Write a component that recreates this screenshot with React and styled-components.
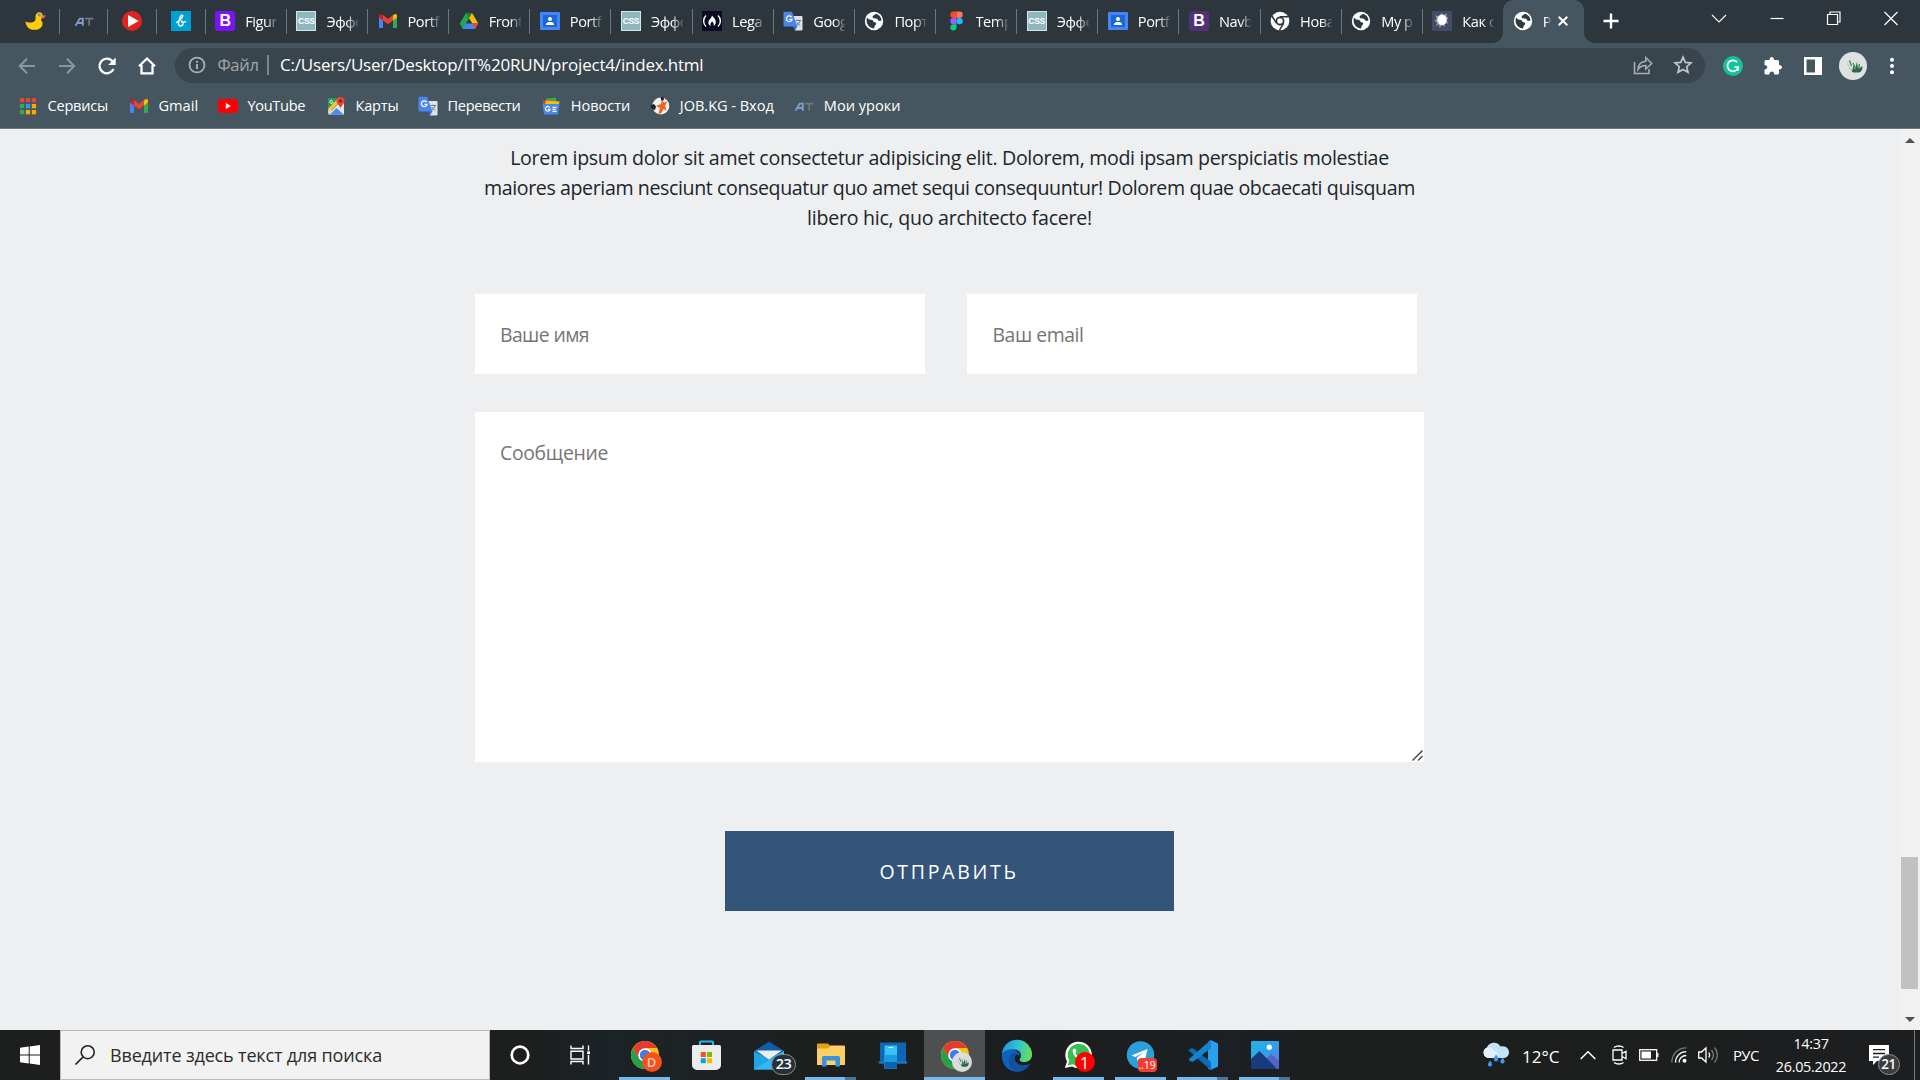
import React from "react";
import styled, { createGlobalStyle } from "styled-components";

const UI = `"Open Sans", "Noto Sans", "Liberation Sans", sans-serif`;

const GlobalStyle = createGlobalStyle`
  * { box-sizing: border-box; }
  html, body { margin: 0; padding: 0; }
  body { font-family: ${UI}; background: #edeff1; overflow: hidden; }
  svg { display: block; flex: none; overflow: visible; }
`;

const Screen = styled.div`
  width: 1920px;
  height: 1080px;
  display: flex;
  flex-direction: column;
  overflow: hidden;
`;

/* ---------- browser chrome ---------- */

const TabStrip = styled.div`
  height: 43px;
  flex: none;
  display: flex;
  align-items: stretch;
  padding-left: 11px;
  background: #2c363c;
`;

const PinnedTab = styled.div`
  width: 48.7px;
  display: flex;
  align-items: center;
  justify-content: center;
  padding: 0 1px 1px 0;
  background: linear-gradient(#6c767b, #6c767b) right 9px / 1px 25px no-repeat;
`;

const Tab = styled.div`
  width: ${(p) => (p.$last ? 80 : 81.15)}px;
  display: flex;
  align-items: center;
  gap: 10px;
  padding: 0 0 1px 9.5px;
  background: ${(p) =>
    p.$last ? "none" : "linear-gradient(#6c767b, #6c767b) right 9px / 1px 25px no-repeat"};
`;

const TabTitle = styled.span`
  width: ${(p) => p.$w || 32}px;
  white-space: nowrap;
  font-size: 14.6px;
  line-height: 22px;
  letter-spacing: -0.45px;
  color: #fff;
  -webkit-mask-image: linear-gradient(90deg, #000 ${(p) => (p.$w ? 40 : 65)}%, transparent 105%);
  mask-image: linear-gradient(90deg, #000 ${(p) => (p.$w ? 40 : 65)}%, transparent 105%);
`;

const ActiveTab = styled.div`
  position: relative;
  width: 81px;
  display: flex;
  align-items: center;
  padding: 0 0 1px 10px;
  background: #455660;
  border-radius: 10px 10px 0 0;
  &::before,
  &::after {
    content: "";
    position: absolute;
    bottom: 0;
    width: 10px;
    height: 10px;
  }
  &::before {
    left: -10px;
    background: radial-gradient(circle at 0 0, transparent 9.5px, #455660 10px);
  }
  &::after {
    right: -10px;
    background: radial-gradient(circle at 100% 0, transparent 9.5px, #455660 10px);
  }
`;

const WindowControls = styled.div`
  margin-left: auto;
  display: flex;
  align-items: flex-start;
  padding: 10px 21px 0 0;
  gap: 41.2px;
`;

const NewTab = styled.div`
  display: flex;
  align-items: center;
  padding: 0 0 1px 19px;
`;

const Toolbar = styled.div`
  height: 45px;
  flex: none;
  display: flex;
  align-items: center;
  padding: 0 18px 0 17px;
  background: #455660;
`;

const NavButtons = styled.div`
  display: flex;
  align-items: center;
  gap: 20px;
  width: 158px;
`;

const Omnibox = styled.div`
  width: 1530px;
  height: 35px;
  border-radius: 18px;
  background: #39454c;
  display: flex;
  align-items: center;
  padding: 0 12px 1px 13px;
  color: #fff;
`;

const Scheme = styled.span`
  margin-left: 11.5px;
  width: 51.5px;
  height: 20px;
  border-right: 2px solid #7c868b;
  font-size: 16.5px;
  line-height: 20px;
  color: #a0a8ac;
  letter-spacing: -0.3px;
  white-space: nowrap;
`;

const Url = styled.span`
  margin-left: 11px;
  font-size: 17px;
  line-height: 24px;
  letter-spacing: -0.2px;
  white-space: nowrap;
`;

const OmniActions = styled.div`
  margin-left: auto;
  display: flex;
  gap: 20px;
`;

const Extensions = styled.div`
  display: flex;
  align-items: center;
  gap: 20px;
  margin-left: 17.5px;
  height: 45px;
`;

const AvatarButton = styled.div`
  margin: 0 2px 0 -3.5px;
`;

const Bookmarks = styled.div`
  height: 41px;
  flex: none;
  display: flex;
  align-items: center;
  padding: 0 0 5px 18px;
  background: #455660;
  border-bottom: 1px solid #6b7a82;
`;

const Bookmark = styled.div`
  width: ${(p) => p.$w}px;
  display: flex;
  align-items: center;
  gap: 9.5px;
`;

const BookmarkName = styled.span`
  padding-bottom: 2px;
  white-space: nowrap;
  color: #fff;
  font-size: 14.6px;
  line-height: 22px;
  letter-spacing: ${(p) => p.$ls || 0}px;
`;

/* ---------- page ---------- */

const Viewport = styled.div`
  height: 901px;
  flex: none;
  display: flex;
  background: #edeff1;
`;

const Page = styled.main`
  flex: 1;
  display: flex;
  flex-direction: column;
  align-items: center;
`;

const Lead = styled.p`
  margin: 14px 0 0;
  width: 949px;
  text-align: center;
  font-size: 19.6px;
  line-height: 30px;
  color: #212529;
`;

const LeadLine = styled.span`
  display: block;
  white-space: nowrap;
  letter-spacing: ${(p) => p.$ls || 0}px;
`;

const Form = styled.form`
  width: 949px;
  margin-top: 61px;
  display: flex;
  flex-direction: column;
`;

const FieldRow = styled.div`
  display: flex;
  gap: 42px;
`;

const Input = styled.input`
  width: 450px;
  height: 80px;
  padding: 0 25px 0 ${(p) => p.$indent || 25}px;
  border: 0;
  background: #fff;
  font-family: ${UI};
  font-size: 19.4px;
  letter-spacing: ${(p) => p.$ls || 0}px;
  &::placeholder { color: #757575; opacity: 1; }
`;

const MessageBox = styled.div`
  position: relative;
  width: 949px;
  height: 350px;
  margin-top: 38px;
`;

const Message = styled.textarea`
  display: block;
  width: 100%;
  height: 100%;
  padding: 26px 25px;
  border: 0;
  background: #fff;
  font-family: ${UI};
  font-size: 19.4px;
  line-height: 30px;
  letter-spacing: -0.32px;
  resize: none;
  &::placeholder { color: #757575; opacity: 1; }
`;

const Grip = styled.span`
  position: absolute;
  right: 1px;
  bottom: 1px;
`;

const Submit = styled.button`
  width: 449px;
  height: 80px;
  margin: 69px auto 0;
  padding: 1px 1px 0 0;
  border: 0;
  background: #34547a;
  color: #fff;
  font-family: ${UI};
  font-size: 19.5px;
  letter-spacing: 2.7px;
`;

const Scrollbar = styled.div`
  width: 21px;
  background: #f1f1f1;
  display: flex;
  flex-direction: column;
  align-items: center;
  padding: 9px 0 8px;
`;

const Thumb = styled.div`
  width: 17px;
  height: 132px;
  margin: auto 0 28px;
  background: #c1c1c1;
`;

const Arrow = styled.div`
  width: 0;
  height: 0;
  border: 5px solid transparent;
  border-top-width: ${(p) => (p.$down ? 5 : 0)}px;
  border-bottom-width: ${(p) => (p.$down ? 0 : 5)}px;
  border-${(p) => (p.$down ? "top" : "bottom")}-color: #505050;
`;

/* ---------- taskbar ---------- */

const Taskbar = styled.footer`
  height: 50px;
  flex: none;
  display: flex;
  background: linear-gradient(90deg, #1d1e1e 0, #1d1e1e 530px, #1b2327 610px, #1d2224 680px, #1e1f1f 800px, #1c1d1e 1060px, #1c2024 1220px, #1d1e1e 1320px, #1c1e1f 1920px);
`;

const SystemButton = styled.div`
  width: 60px;
  display: flex;
  align-items: center;
  justify-content: center;
`;

const Search = styled.div`
  width: 430px;
  display: flex;
  align-items: center;
  gap: 15px;
  padding-left: 14px;
  border: 1px solid #bababa;
  background: #f2f2f2;
  color: #2b2b2b;
  font-size: 18px;
  letter-spacing: -0.15px;
  white-space: nowrap;
`;

const Apps = styled.div`
  display: flex;
  gap: 1px;
  margin-left: 4px;
`;

const AppBox = styled.div`
  width: 61px;
  height: 50px;
  display: flex;
  flex-direction: column;
  align-items: center;
  justify-content: space-between;
  padding-top: 10px;
  background: ${(p) => (p.$active ? "#4d4f50" : "transparent")};
`;

const IconHolder = styled.div`
  position: relative;
  width: 32px;
  height: ${(p) => p.$h || 32}px;
`;

const Running = styled.div`
  width: ${(p) => (p.$full ? 61 : 51)}px;
  height: 3px;
  background: ${(p) =>
    p.$stacked ? "linear-gradient(90deg, #76b9ed 40px, #4b7698 40px)" : "#76b9ed"};
`;

const Badge = styled.span`
  position: absolute;
  left: ${(p) => p.$x}px;
  top: ${(p) => p.$y}px;
  width: ${(p) => p.$w}px;
  height: ${(p) => p.$h}px;
  display: flex;
  align-items: center;
  justify-content: center;
  border-radius: ${(p) => p.$r || 50}px;
  border: ${(p) => p.$border || "0"};
  background: ${(p) => p.$bg};
  color: ${(p) => p.$color || "#fff"};
  font-family: ${UI};
  font-size: ${(p) => p.$fs}px;
  font-weight: ${(p) => p.$fw || 400};
  line-height: 1;
  letter-spacing: ${(p) => p.$ls || 0}px;
`;

const Tray = styled.div`
  margin-left: auto;
  width: 438px;
  display: flex;
  align-items: center;
  color: #fff;
`;

const Slot = styled.div`
  width: ${(p) => p.$w}px;
  flex: none;
  display: flex;
  align-items: center;
`;

const TrayText = styled.span`
  font-size: ${(p) => p.$fs || 15}px;
  letter-spacing: ${(p) => p.$ls || 0}px;
  white-space: nowrap;
  padding-top: ${(p) => p.$drop || 0}px;
`;

const Clock = styled.div`
  width: 96px;
  text-align: center;
  font-size: 14.4px;
  line-height: 23px;
  letter-spacing: -0.3px;
  white-space: nowrap;
`;

const Notifications = styled.div`
  margin-left: 10px;
`;

const DesktopEdge = styled.div`
  width: 6px;
  height: 50px;
  margin-left: auto;
  border-left: 1px solid #7a7b7b;
`;

/* ---------- icons ---------- */

const Svg = ({ s = 20, w, h, vb = "0 0 20 20", children, ...rest }) => (
  <svg width={w || s} height={h || s} viewBox={vb} fill="none" {...rest}>
    {children}
  </svg>
);

const Duck = () => (
  <Svg>
    <path d="M10.500 6.500C10.300 3.300 12 1.300 14.500 1.300C17 1.300 18 3.500 17.500 5.500C17.200 7.200 16 8 16 9.300C17.800 11 18 13 17 15C15.700 18 12.500 18.800 9 18.800C5 18.800 1 16.800 .4 10C2 11.700 5 11.800 7.500 11.200C9.500 10.700 11 9.500 10.500 6.500Z" fill="#fdcb0a" />
    <circle cx="14.300" cy="4" r="1.600" fill="#5d9bb0" />
    <path d="M16.500 4.600L20.500 4.200C20.500 6.500 18.500 7.800 16.300 7.400Z" fill="#f2685a" />
  </Svg>
);
const AT = () => (
  <Svg>
    <path d="M1.500 14.800L5.800 7.600H8.800V14.800M4 12H9" stroke="#7e9dc8" strokeWidth="1.900" />
    <path d="M11 7.600H19.500M15.200 7.600V14.800" stroke="#6f7a80" strokeWidth="1.700" />
  </Svg>
);
const PlayRound = () => (
  <Svg>
    <circle cx="10" cy="10" r="10" fill="#e2231d" />
    <path d="M6 4L16.800 10L6 16Z" fill="#fff" />
  </Svg>
);
const BlueScript = () => (
  <Svg>
    <rect width="20" height="20" fill="#009fd6" />
    <path d="M5.500 11.500C8.500 9.500 12 6.300 11.700 4.600C11.300 3.500 9.800 4.500 9 6.500C8.200 8.500 7.300 11 7.500 13C7.800 15.800 11.300 15.600 12 13C12.400 11.300 11.500 9.800 10.500 10.200C10.900 11.600 13 11.700 14.500 10.500" stroke="#fff" strokeWidth="1.400" strokeLinecap="round" />
  </Svg>
);
const LetterTile = styled.span`
  width: 20px;
  height: 20px;
  flex: none;
  display: flex;
  align-items: center;
  justify-content: center;
  border-radius: ${(p) => p.$r || 0}px;
  border: ${(p) => p.$border || "0"};
  background: ${(p) => p.$bg};
  color: #fff;
  font-family: "Liberation Sans", sans-serif;
  font-weight: 700;
  font-size: ${(p) => p.$fs}px;
  line-height: 1;
  letter-spacing: ${(p) => p.$ls || 0}px;
`;
const BootPurple = () => <LetterTile $bg="#7c12f6" $r={3} $fs={16}>B</LetterTile>;
const BootOld = () => <LetterTile $bg="#523276" $r={3} $fs={16}>B</LetterTile>;
const Css = () => <LetterTile $bg="#8fb8be" $border="1px solid #d5e6e8" $fs={8.5} $ls={-0.3}>CSS</LetterTile>;
const Gmail = () => (
  <Svg>
    <path d="M1 5V16.200C1 16.800 1.500 17 2 17H5V8Z" fill="#4285f4" />
    <path d="M15 8V17H18C18.600 17 19 16.700 19 16.200V5Z" fill="#34a853" />
    <path d="M15 4.500V9.500L19 6.500V5C19 3 17 2.500 15.800 3.600Z" fill="#fbbc04" />
    <path d="M5 9.500V4L10 8L15 4V9.500L10 13.300Z" fill="#ea4335" />
    <path d="M1 5V6.500L5 9.500V4.200L4.200 3.600C3 2.500 1 3.200 1 5Z" fill="#c5221f" />
  </Svg>
);
const Drive = () => (
  <Svg>
    <path d="M13 2L19.300 12.500H13.400L10 7.300L7 2Z" fill="#fbbc04" />
    <path d="M6.800 12.500H19.300L16 18H4L1 12.800Z" fill="#4285f4" />
    <path d="M13.400 12.500H19.300L16 18Z" fill="#ea4335" />
    <path d="M7 2L10 7.300L4 18L.8 12.500Z" fill="#22a654" />
    <path d="M7 2H13L10 7.300Z" fill="#188038" />
  </Svg>
);
const Contacts = () => (
  <Svg>
    <rect y="1" width="20" height="18" rx="1" fill="#4486f5" />
    <rect x="3" y="4" width="14" height="12" fill="#1e66d2" />
    <circle cx="10" cy="8" r="2" fill="#fff" />
    <path d="M5.800 14C6 11.500 8 11 10 11C12 11 14 11.500 14.200 14Z" fill="#fff" />
  </Svg>
);
const Fcc = () => (
  <Svg>
    <rect width="20" height="20" fill="#0a0a23" />
    <path d="M4 4.500C.8 7.500 .8 12.500 4 15.500M16 4.500C19.200 7.500 19.200 12.500 16 15.500" stroke="#fff" strokeWidth="1.400" />
    <path d="M10 4.500C11.500 6.500 14 8.500 13.800 11.300C13.700 13.500 12.500 14.500 11.500 15C12.300 13 11.500 11.500 10 10.500C8.800 11.800 8 13 8.700 15C7 14.300 6.200 12.800 6.400 11C6.700 8.500 9.500 7.500 10 4.500Z" fill="#fff" />
  </Svg>
);
const Translate = () => (
  <Svg>
    <path d="M8 5H18.500A1 1 0 0 1 19.500 6V18.500A1 1 0 0 1 18.500 19.500H12Z" fill="#dfe3e6" />
    <path d="M9.500 15H14.500L12 19.500Z" fill="#3367d6" />
    <path d="M1.500 .8H9L14.500 15.500H1.500A1 1 0 0 1 .5 14.500V1.800A1 1 0 0 1 1.500 .8Z" fill="#4a86ee" />
    <path d="M8.600 6.200A2.800 2.800 0 1 0 9 8.300H6.500" stroke="#fff" strokeWidth="1.300" />
    <path d="M12.500 9.500H18M15.300 8.500V9.500M17 9.500C16.500 12 15 13.500 13.800 14.300M13.800 11C14.500 12.500 16 13.800 17.300 14.600" stroke="#6d7f8c" strokeWidth="1" />
  </Svg>
);
const Globe = () => (
  <Svg>
    <circle cx="10" cy="10" r="9.200" fill="#fff" />
    <path d="M3 6.500C4.500 8.500 6.500 8.700 8.200 9C9.500 9.500 9 11 10.500 11.300C12 11.500 13 12.500 11.500 14C10.500 15 10.500 16 10 17.500C6 17.300 2.800 14 2.600 10C2.600 8.700 2.800 7.400 3 6.500Z" fill="#2f3a40" />
    <path d="M9 4.800C10.300 4.500 10.500 3.200 12 2.700C15 3.500 17.200 6 17.500 9.300C16 10.500 14 9.800 13.500 8.300C13 7 10.500 8 9.300 7.200C8.600 6.700 8.300 5.300 9 4.800Z" fill="#2f3a40" />
  </Svg>
);
const Figma = () => (
  <Svg>
    <path d="M7.500 .5H10.500V6.900H7.500A3.200 3.200 0 0 1 7.500 .5Z" fill="#f24e1e" />
    <path d="M10.500 .5H13.500A3.200 3.200 0 0 1 13.500 6.900H10.500Z" fill="#ff7262" />
    <path d="M7.500 6.900H10.500V13.300H7.500A3.200 3.200 0 0 1 7.500 6.900Z" fill="#a259ff" />
    <circle cx="13.600" cy="10.100" r="3.200" fill="#1abcfe" />
    <path d="M7.500 13.300H10.500V16.500A3.100 3.100 0 1 1 7.500 13.300Z" fill="#0acf83" />
  </Svg>
);
const ChromeMono = () => (
  <Svg>
    <circle cx="10" cy="10" r="9.300" fill="#fff" />
    <circle cx="10" cy="10" r="3.600" fill="#fff" stroke="#2c363c" strokeWidth="1.700" />
    <path d="M10 5.700H18.500M6.300 12.200L2 5M13.700 12.200L9.500 19.200" stroke="#2c363c" strokeWidth="1.500" />
  </Svg>
);
const Splat = () => (
  <Svg>
    <rect x="0" y="0" width="20" height="20" fill="#454a66" />
    <path d="M9.500 2L11 4L14.500 2.500L14.500 5.500L16.500 7L15 9L16 12.500L13 12.500L12.500 16L10 14L7.500 17L7 13.500L4 15L5 11.500L2.500 10L4.500 8L3.500 4.500L7 5Z" fill="#9799a9" />
    <ellipse cx="10" cy="8.700" rx="4.600" ry="5.300" fill="#fff" />
  </Svg>
);
const CloseX = () => (
  <Svg s={10} vb="0 0 10 10"><path d="M.7 .7L9.300 9.300M9.300 .7L.7 9.300" stroke="#fff" strokeWidth="2" /></Svg>
);
const Plus = () => (
  <Svg s={16} vb="0 0 16 16"><path d="M8 .5V15.500M.5 8H15.500" stroke="#fff" strokeWidth="2.400" /></Svg>
);

const Back = () => (
  <Svg><path d="M18 10H3M10 2.800L2.800 10L10 17.200" stroke="#8b969c" strokeWidth="2" /></Svg>
);
const Forward = () => (
  <Svg><path d="M2 10H17M10 2.800L17.200 10L10 17.200" stroke="#8b969c" strokeWidth="2" /></Svg>
);
const Reload = () => (
  <Svg>
    <path d="M16.500 13A7.300 7.300 0 1 1 15 4.800L17 7" stroke="#fff" strokeWidth="2.300" />
    <path d="M18.700 1.500V9H11.200Z" fill="#fff" />
  </Svg>
);
const Home = () => (
  <Svg><path d="M4.500 9V17.300H15.500V9M2 10.300L10 2.500L18 10.300" stroke="#fff" strokeWidth="2.300" /></Svg>
);
const Info = () => (
  <Svg s={18}>
    <circle cx="10" cy="10" r="8.300" stroke="#a7afb3" strokeWidth="2" />
    <path d="M10 9V14.500M10 5.500V7.600" stroke="#a7afb3" strokeWidth="2.200" />
  </Svg>
);
const Share = () => (
  <Svg>
    <path d="M1.500 7V18.500H16V14" stroke="#a7afb3" strokeWidth="1.600" />
    <path d="M5 14.500C5.300 9.500 8 6.600 12.800 6.300V2.500L18.700 8.500L12.800 14V10.500C9.500 10.400 7 11.500 5 14.500Z" stroke="#a7afb3" strokeWidth="1.500" />
  </Svg>
);
const Star = () => (
  <Svg><path d="M10 2.200L12.300 7.400L18 8L13.700 11.700L15 17.300L10 14.400L5 17.300L6.300 11.700L2 8L7.700 7.400Z" stroke="#c0c6c9" strokeWidth="1.700" /></Svg>
);
const Grammarly = () => (
  <Svg>
    <circle cx="10" cy="10" r="10" fill="#15c39a" />
    <path d="M14.200 6.300A5.500 5.500 0 1 0 15.300 11H11.300M15 11V14.800" stroke="#fff" strokeWidth="1.700" />
  </Svg>
);
const Puzzle = () => (
  <Svg><path d="M1.500 5.500A1.500 1.500 0 0 1 3 4H6.500C6.500 0 11 0 11 4H14.500A1.500 1.500 0 0 1 16 5.500V9C20 9 20 13.500 16 13.500V17A1.500 1.500 0 0 1 14.500 18.500H11.200C11.200 14.500 6.300 14.500 6.300 18.500H3A1.500 1.500 0 0 1 1.500 17V13.500C5.200 13.500 5.200 9 1.500 9Z" fill="#fff" /></Svg>
);
const SidePanel = () => (
  <Svg><path fillRule="evenodd" d="M1 1H19V19H1ZM3.500 3.500V16.500H12V3.500Z" fill="#fff" /></Svg>
);
const Plant = () => (
  <>
    <path d="M8 9C9 13 10.500 16 13 19L14.500 13L16 18L18 9.500L19 17L23.500 14C23.500 18 22.500 20 20 20.500H14.500C11.500 18.500 9 14 8 9Z" fill="#2c6748" />
    <path d="M10.500 8.500L12.500 14M14 11L17 17M20.500 12L19.500 17" stroke="#3f8059" strokeWidth="1.300" />
  </>
);
const Avatar = () => (
  <Svg s={28} vb="0 0 28 28"><circle cx="14" cy="14" r="14" fill="#dfe1e1" /><Plant /></Svg>
);
const Dots = () => (
  <Svg w={6} h={20} vb="0 0 6 20">
    <circle cx="3" cy="3.700" r="2" fill="#fff" /><circle cx="3" cy="10" r="2" fill="#fff" /><circle cx="3" cy="16.300" r="2" fill="#fff" />
  </Svg>
);

const Services = () => (
  <Svg>
    {["#ea4335", "#ea4335", "#ea4335", "#34a853", "#2b9af3", "#f9ab00", "#34a853", "#f9ab00", "#f9ab00"].map((c, i) => (
      <rect key={i} x={1.8 + (i % 3) * 6} y={2 + Math.floor(i / 3) * 6} width="4.300" height="4.300" fill={c} />
    ))}
  </Svg>
);
const YouTube = () => (
  <Svg><rect y="3" width="20" height="14" rx="3" fill="#f00" /><path d="M7.800 7L13 10L7.800 13Z" fill="#fff" /></Svg>
);
const Maps = () => (
  <Svg>
    <path d="M2 2H15L2 17Z" fill="#1e9e57" />
    <path d="M2 18.500L12 8L18 6V18.500Z" fill="#e3e6e8" />
    <path d="M2 15V12.500L11 3.500L13.500 6L3 17Z" fill="#fbc02d" />
    <path d="M4 18.500L10.500 12L17.500 18.500Z" fill="#4a8af4" />
    <path d="M2 16L5 13L6 14L2 18Z" fill="#e3e6e8" />
    <path d="M14.500 1A4 4 0 0 1 18.500 5C18.500 8 15.500 9 14.500 12.500C13.500 9 10.500 8 10.500 5A4 4 0 0 1 14.500 1Z" fill="#ea4335" />
    <circle cx="14.500" cy="5" r="1.500" fill="#8c1c13" />
    <path d="M6.500 4.700A1.600 1.600 0 1 0 7 6.200H5.600" stroke="#fff" strokeWidth=".9" />
  </Svg>
);
const News = () => (
  <Svg>
    <path d="M5 2.500L15 1.500L16 8H5Z" fill="#34a853" />
    <path d="M1.500 5L10 4L12 9H2.500Z" fill="#ea4335" />
    <path d="M5 4.500L18.500 5.500L18 9H4Z" fill="#fbbc04" />
    <path d="M1.500 8H18.500L17 18.500H3Z" fill="#4a86ee" />
    <path d="M8.700 11.500A2.300 2.300 0 1 0 9 13.300H7M11.500 11.300H15.500M11.500 13.300H14.700M11.500 15.300H15.500" stroke="#fff" strokeWidth="1.200" />
  </Svg>
);
const JobKg = () => (
  <Svg>
    <circle cx="10.800" cy="10" r="8.500" fill="#f3efea" />
    <path d="M.5 9.500L4 8L6 10.500L5 14L2 13ZM10.500 1H13.500L14 4L11.500 5Z" fill="#22211f" />
    <path d="M12 4.500L14 6.500L17.500 5.500L15 9.500L16.500 14.500L13.500 13L11 17.500H8.500L10 12L6 10L11 8Z" fill="#f0621b" />
  </Svg>
);

const WinLogo = () => (
  <Svg><path d="M0 2.800L8.700 1.500V9.500H0ZM9.700 1.400L20 0V9.500H9.700ZM0 10.500H8.700V18.500L0 17.200ZM9.700 10.500H20V20L9.700 18.600Z" fill="#fff" /></Svg>
);
const SearchIcon = () => (
  <Svg><circle cx="12.700" cy="7.200" r="6.500" stroke="#222" strokeWidth="1.600" /><path d="M8 12L.5 19.500" stroke="#222" strokeWidth="1.700" /></Svg>
);
const Cortana = () => (
  <Svg s={20}><circle cx="10" cy="10" r="8.300" stroke="#fff" strokeWidth="2.700" /></Svg>
);
const TaskView = () => (
  <Svg>
    <path d="M1 .5V3.500H13V.5M1 6.300H13V14H1ZM1 19.500V16.500H13V19.500M18.500 .5V5.500M18.500 10V19.500" stroke="#fff" strokeWidth="1.400" />
    <rect x="17.200" y="6.300" width="2.800" height="2.800" fill="#fff" />
  </Svg>
);
const Chrome = () => (
  <Svg s={32} vb="0 0 32 32">
    <circle cx="16" cy="15" r="14" fill="#fbc116" />
    <path d="M28.100 8H16L10 18.500L3.900 8A14 14 0 0 1 28.100 8Z" fill="#e33b2e" />
    <path d="M3.900 8A14 14 0 0 0 16 29L22 18.500L10 18.500Z" fill="#22a148" />
    <circle cx="16" cy="15" r="6.800" fill="#fff" /><circle cx="16" cy="15" r="5.200" fill="#3a7df0" />
  </Svg>
);
const PlantBadge = () => (
  <Svg s={20} vb="0 0 28 28"><circle cx="14" cy="14" r="14" fill="#dadcdb" /><Plant /></Svg>
);
const Overlay = styled.div`
  position: absolute;
  left: ${(p) => p.$x}px;
  top: ${(p) => p.$y}px;
`;
const Store = () => (
  <Svg s={32} vb="0.5 1 32 32">
    <path d="M9.500 7V3.500A1 1 0 0 1 10.500 2.500H21.500A1 1 0 0 1 22.500 3.500V7" stroke="#2bb4ea" strokeWidth="2.200" />
    <path d="M1.500 7.500A1.500 1.500 0 0 1 3 6H29A1.500 1.500 0 0 1 30.500 7.500V26A5 5 0 0 1 25.500 31H6.500A5 5 0 0 1 1.500 26Z" fill="#ececec" />
    <path d="M10.300 13H15.300V18H10.300Z" fill="#f1511b" /><path d="M16.500 13H21.500V18H16.500Z" fill="#80b900" />
    <path d="M10.300 19.200H15.300V24.200H10.300Z" fill="#00a3ee" /><path d="M16.500 19.200H21.500V24.200H16.500Z" fill="#fbb800" />
  </Svg>
);
const Mail = () => (
  <Svg s={32} vb="0 0 32 32">
    <path d="M1 11L16 1.500L31 11L16 20Z" fill="#0f5ca8" />
    <path d="M1 11L16 19L31 11V29.500H1Z" fill="#21a3e8" />
    <path d="M1 29.500L31 11V29.500Z" fill="#36b6f2" />
    <path d="M3 10.500H29L16 19.500Z" fill="#eeeeee" />
  </Svg>
);
const Explorer = () => (
  <Svg s={32} vb="0 0 32 32">
    <path d="M2 4.500A1 1 0 0 1 3 3.500H13L15.500 6V9H2Z" fill="#e2a10d" />
    <path d="M2 8.500H13L15.500 5.500H29A1 1 0 0 1 30 6.500V25H2Z" fill="#fcd062" />
    <path d="M7 26.500V17.500A1.500 1.500 0 0 1 8.500 16H23.500A1.500 1.500 0 0 1 25 17.500V26.500H20.500V20.500H11.500V26.500Z" fill="#3a92dc" />
  </Svg>
);
const PhoneLink = () => (
  <Svg s={32} vb="0 0 32 32">
    <path d="M3 2.500H29V22H3Z" fill="#0f66b4" />
    <path d="M1 21.500H31L29.500 23.800H2.500Z" fill="#1579c9" />
    <path d="M7.500 5.500H20V28.500H7.500Z" fill="#36c3f3" />
    <path d="M7.500 15H20V28.500H7.500Z" fill="#1c9ae0" /><path d="M7.500 22H20V28.500H7.500Z" fill="#0b62b4" />
    <path d="M11.500 7.500H16" stroke="#fff" strokeWidth="1" />
  </Svg>
);
const Edge = () => (
  <Svg s={32} vb="0 0 32 32">
    <defs>
      <linearGradient id="edgeTop" x1="0" y1="8" x2="31" y2="14" gradientUnits="userSpaceOnUse">
        <stop offset="0" stopColor="#1c93e0" /><stop offset=".5" stopColor="#2fc2d8" /><stop offset="1" stopColor="#6be04b" />
      </linearGradient>
    </defs>
    <path d="M1 15A15 15 0 0 1 31 14.500C31 20 27 22 23.500 22C20 22 18 20.500 18.800 19C22 14 18 9 12 9.500C6 10 1 13 1 15Z" fill="url(#edgeTop)" />
    <path d="M1 15C2 10.500 8 8.500 12.500 9.800C17 11 19 14 18 16C16.500 12.500 10 15.500 11.500 21.500C12.500 26 18 28 23 27C26 26.400 28 25 29 24A15 15 0 0 1 1 15Z" fill="#0c62bd" />
    <path d="M11 13.500C7 17 6 25 12 29.500C19 33 26.500 29 29.300 23.500C26.500 25.300 20 26.500 16 23C12.500 20 13.500 15 16.500 14C15 12.500 13 12.500 11 13.500Z" fill="#1450a0" />
  </Svg>
);
const WhatsApp = () => (
  <Svg s={32} vb="0 0 32 32">
    <path d="M1.800 28L4 21.500A13.300 13.300 0 1 1 9 26.500Z" fill="#fff" />
    <path d="M4.800 25.500L6.300 20.500A11 11 0 1 1 10 24.300Z" fill="#35bf4e" />
    <path d="M10 9C9 11.500 10.500 15.500 14.500 19C17 21 19 21.500 20.500 20.500L21.500 18L18.500 16.500L17 17.500C15 17 13 15 12.500 13L13.500 11.500L12.300 8.500Z" fill="#fff" />
  </Svg>
);
const Telegram = () => (
  <Svg s={32} vb="0 0 32 32">
    <circle cx="15.500" cy="15" r="13.700" fill="#2ba0da" />
    <path d="M6.500 15.500L22.500 9L19.500 22L14.500 18.500L12.500 21L11.800 17.800L19 12L10.500 17Z" fill="#fff" />
  </Svg>
);
const VsCode = () => (
  <Svg s={32} vb="0 0 32 32">
    <path d="M23.500 0L31 3.500V26.500L23.500 30L21 28.500V2Z" fill="#27a0f0" />
    <path d="M1.500 10.500L4 8.300L6.500 8.500L24 22V29.500L22.500 29Z" fill="#0a6cb4" />
    <path d="M1.500 19.500L4 21.700L6.500 21.500L24 8V.5L22.500 1Z" fill="#1584cc" />
  </Svg>
);
const Photos = () => (
  <Svg s={32} vb="0 1 32 32">
    <defs>
      <linearGradient id="sky" x1="0" y1="0" x2="1" y2="1"><stop offset=".3" stopColor="#27abe9" /><stop offset="1" stopColor="#5b7be0" /></linearGradient>
    </defs>
    <rect x="2" y="2" width="28" height="28" rx="1" fill="url(#sky)" />
    <path d="M13 24L22 15L30 22V30H13Z" fill="#5264c8" />
    <path d="M2 20L10.500 12L28 30H2Z" fill="#163c7b" />
    <circle cx="20.300" cy="8.300" r="2.700" fill="#fff" />
  </Svg>
);

const Rain = () => (
  <Svg w={28} h={26} vb="0 0 28 26">
    <path d="M6 16A5.500 5.500 0 0 1 5 5.500C6.500 0 16 -1.500 18.500 4.500C24 3 27.500 7 27 11C26.500 15 23 16.500 20 16Z" fill="#c3e2f5" />
    <path d="M6 16A5.500 5.500 0 0 1 5 5.500C8 4.500 11 6 11.500 9C16 9 17 14 14 16Z" fill="#e3f1fa" />
    <path d="M14 12.500C16 15 16.500 16 16.200 17.300A2.200 2.200 0 0 1 11.800 17.300C11.700 16 12.500 15 14 12.500ZM8 18.500C10 21 10.300 22 10 23.200A2.200 2.200 0 0 1 6 23.200C5.800 22 6.500 21 8 18.500ZM20.500 15.500C22.500 18 22.800 19 22.500 20.200A2.200 2.200 0 0 1 18.400 20.200C18.200 19 19 18 20.500 15.500Z" fill="#3f97ee" />
  </Svg>
);
const ChevronUp = () => (
  <Svg w={16} h={10} vb="0 0 16 10"><path d="M.7 9L8 1.700L15.300 9" stroke="#fff" strokeWidth="1.500" /></Svg>
);
const MeetNow = () => (
  <Svg w={16} h={20} vb="0 0 16 20">
    <path d="M1 5H10V15H1ZM10 8.500L14 6.300V13.700L10 11.500M2 2.500C4.500 .5 9 .5 11.500 2.500M2 17.500C4.500 19.500 9 19.500 11.500 17.500" stroke="#fff" strokeWidth="1.300" />
  </Svg>
);
const Battery = () => (
  <Svg w={20} h={12} vb="0 0 20 12">
    <rect x=".7" y=".7" width="17" height="10.600" stroke="#fff" strokeWidth="1.300" /><rect x="2.500" y="2.500" width="9.500" height="7" fill="#fff" />
    <path d="M18.800 4V8" stroke="#fff" strokeWidth="1.300" />
  </Svg>
);
const Wifi = () => (
  <Svg w={16} h={16} vb="0 0 16 16">
    <path d="M.8 15.500C.8 7 7 .8 15.300 .8" stroke="#77797a" strokeWidth="1.300" />
    <path d="M4.500 15.500C4.500 9.500 9 4.700 15.300 4.700M8 15.500C8 11.500 11 8.500 15.300 8.500" stroke="#fff" strokeWidth="1.300" />
    <circle cx="13.500" cy="13.700" r="2" fill="#fff" />
  </Svg>
);
const Speaker = () => (
  <Svg w={21} h={18} vb="0 0 21 18">
    <path d="M.7 6H3.500L8 2V16L3.500 12H.7Z" stroke="#fff" strokeWidth="1.300" />
    <path d="M10.800 6.500C11.800 8 11.800 10 10.800 11.500" stroke="#fff" strokeWidth="1.300" />
    <path d="M13.500 4C15.800 7 15.800 11 13.500 14M16.500 1.500C20.300 6 20.300 12 16.500 16.500" stroke="#77797a" strokeWidth="1.300" />
  </Svg>
);
const Notes = () => (
  <Svg w={20} h={20} vb="0 0 20 20">
    <path d="M0 0H20V16H8L4 20V16H0Z" fill="#fff" /><path d="M4 4.700H16M4 8.500H16M4 12.200H10" stroke="#1c1e1f" strokeWidth="1.300" />
  </Svg>
);
const GripLines = () => (
  <Svg s={11} vb="0 0 11 11"><path d="M.5 10.500L10.500 .5M6 10.500L10.500 6" stroke="#4a4a4a" strokeWidth="1.500" /></Svg>
);

/* ---------- data ---------- */

const pinned = [Duck, AT, PlayRound, BlueScript];

const tabs = [
  [BootPurple, "Figur"],
  [Css, "Эффе"],
  [Gmail, "Portf"],
  [Drive, "Front"],
  [Contacts, "Portf"],
  [Css, "Эффе"],
  [Fcc, "Lega"],
  [Translate, "Goog"],
  [Globe, "Порт"],
  [Figma, "Temp"],
  [Css, "Эффе"],
  [Contacts, "Portf"],
  [BootOld, "Navb"],
  [ChromeMono, "Нова"],
  [Globe, "My p"],
  [Splat, "Как с"],
];

const bookmarks = [
  [Services, "Сервисы", 111, -0.25],
  [Gmail, "Gmail", 89, 0],
  [YouTube, "YouTube", 108, -0.35],
  [Maps, "Карты", 92, -0.2],
  [Translate, "Перевести", 123.3, -0.3],
  [News, "Новости", 109, -0.05],
  [JobKg, "JOB.KG - Вход", 144, -0.05],
  [AT, "Мои уроки", 110, 0],
];

const apps = [
  { Icon: Chrome, run: true, extra: <Badge $x={13} $y={12} $w={20} $h={20} $bg="#f4511e" $color="#f9cdbd" $fs={13} $fw={600}>D</Badge> },
  { Icon: Store },
  { Icon: Mail, extra: <Badge $x={18.5} $y={14} $w={25} $h={21} $border="1px solid #8d9194" $bg="#25313a" $fs={14.5} $fw={600} $ls={-0.5}>23</Badge> },
  { Icon: Explorer, run: true, stacked: true },
  { Icon: PhoneLink },
  { Icon: Chrome, run: true, active: true, extra: <Overlay $x={13} $y={12}><PlantBadge /></Overlay> },
  { Icon: Edge },
  { Icon: WhatsApp, run: true, extra: <Badge $x={12} $y={12} $w={20} $h={20} $bg="#f00" $fs={17}>1</Badge> },
  { Icon: Telegram, run: true, extra: <Badge $x={13} $y={18} $w={19} $h={14} $r={4} $bg="#f23c34" $fs={10.5}>..19</Badge> },
  { Icon: VsCode, run: true, stacked: true },
  { Icon: Photos, run: true, stacked: true },
];

export default function App() {
  return (
    <Screen>
      <GlobalStyle />
      <TabStrip>
        {pinned.map((Icon, i) => (
          <PinnedTab key={i}><Icon /></PinnedTab>
        ))}
        {tabs.map(([Icon, title], i) => (
          <Tab key={i} $last={i === tabs.length - 1}>
            <Icon />
            <TabTitle>{title}</TabTitle>
          </Tab>
        ))}
        <ActiveTab>
          <Slot $w={30}><Globe /></Slot>
          <Slot $w={15.5}><TabTitle $w={8}>P</TabTitle></Slot>
          <CloseX />
        </ActiveTab>
        <NewTab><Plus /></NewTab>
        <WindowControls>
          <Svg s={16} vb="0 0 16 16"><path d="M1 5L8 12L15 5" stroke="#fff" strokeWidth="1.100" /></Svg>
          <Svg s={16} vb="0 0 16 16"><path d="M1.500 8.500H14.500" stroke="#fff" strokeWidth="1.200" /></Svg>
          <Svg s={16} vb="0 0 16 16"><path d="M1.500 4.500H11.500V14.500H1.500ZM4 4.500V2H14V12H11.500" stroke="#fff" strokeWidth="1.200" /></Svg>
          <Svg s={16} vb="0 0 16 16"><path d="M1.500 2L14.500 15M14.500 2L1.500 15" stroke="#fff" strokeWidth="1.200" /></Svg>
        </WindowControls>
      </TabStrip>
      <Toolbar>
        <NavButtons><Back /><Forward /><Reload /><Home /></NavButtons>
        <Omnibox>
          <Info />
          <Scheme>Файл</Scheme>
          <Url>C:/Users/User/Desktop/IT%20RUN/project4/index.html</Url>
          <OmniActions><Share /><Star /></OmniActions>
        </Omnibox>
        <Extensions>
          <Grammarly />
          <Puzzle />
          <SidePanel />
          <AvatarButton><Avatar /></AvatarButton>
          <Dots />
        </Extensions>
      </Toolbar>
      <Bookmarks>
        {bookmarks.map(([Icon, name, w, ls]) => (
          <Bookmark key={name} $w={w}>
            <Icon />
            <BookmarkName $ls={ls}>{name}</BookmarkName>
          </Bookmark>
        ))}
      </Bookmarks>
      <Viewport>
        <Page>
          <Lead>
            <LeadLine $ls={-0.32}>Lorem ipsum dolor sit amet consectetur adipisicing elit. Dolorem, modi ipsam perspiciatis molestiae</LeadLine>
            <LeadLine $ls={-0.395}>maiores aperiam nesciunt consequatur quo amet sequi consequuntur! Dolorem quae obcaecati quisquam</LeadLine>
            <LeadLine $ls={-0.26}>libero hic, quo architecto facere!</LeadLine>
          </Lead>
          <Form>
            <FieldRow>
              <Input placeholder="Ваше имя" $ls={-0.6} />
              <Input placeholder="Ваш email" $ls={-0.45} $indent={25.5} />
            </FieldRow>
            <MessageBox>
              <Message placeholder="Сообщение" />
              <Grip><GripLines /></Grip>
            </MessageBox>
            <Submit type="button">ОТПРАВИТЬ</Submit>
          </Form>
        </Page>
        <Scrollbar><Arrow /><Thumb /><Arrow $down /></Scrollbar>
      </Viewport>
      <Taskbar>
        <SystemButton><WinLogo /></SystemButton>
        <Search><SearchIcon />Введите здесь текст для поиска</Search>
        <SystemButton><Cortana /></SystemButton>
        <SystemButton><TaskView /></SystemButton>
        <Apps>
          {apps.map(({ Icon, run, active, stacked, extra }, i) => (
            <AppBox key={i} $active={active}>
              <IconHolder><Icon />{extra}</IconHolder>
              {run && <Running $full={active} $stacked={stacked} />}
            </AppBox>
          ))}
        </Apps>
        <Tray>
          <Slot $w={40}><Rain /></Slot>
          <Slot $w={58}><TrayText $fs={17} $drop={3}>12°C</TrayText></Slot>
          <Slot $w={32}><ChevronUp /></Slot>
          <Slot $w={27}><MeetNow /></Slot>
          <Slot $w={32}><Battery /></Slot>
          <Slot $w={27}><Wifi /></Slot>
          <Slot $w={35}><Speaker /></Slot>
          <Slot $w={30}><TrayText $ls={-0.7}>РУС</TrayText></Slot>
          <Clock>14:37<br />26.05.2022</Clock>
          <Notifications>
            <IconHolder $h={20}>
              <Notes />
              <Badge $x={8.5} $y={9} $w={22} $h={21} $border="1px solid #8d9194" $bg="#3b3d3e" $fs={13.5} $fw={600} $ls={-0.5}>21</Badge>
            </IconHolder>
          </Notifications>
          <DesktopEdge />
        </Tray>
      </Taskbar>
    </Screen>
  );
}
